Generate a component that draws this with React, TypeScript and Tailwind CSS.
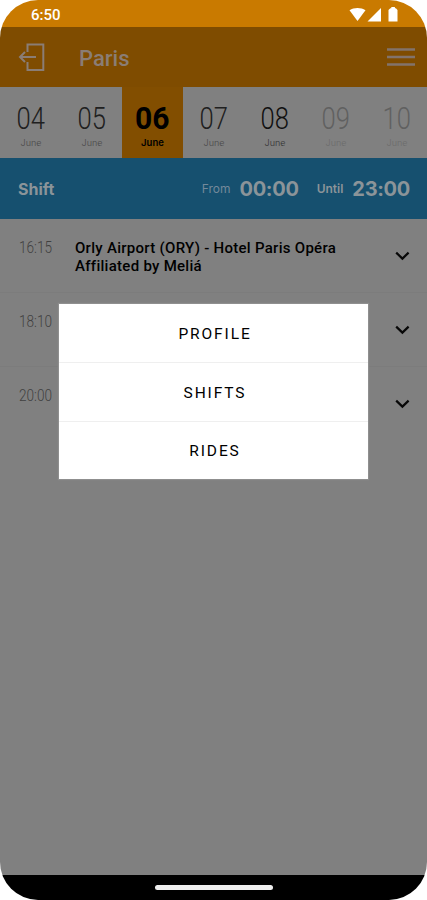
const days = [
  { day: "04", style: "text-[#202020]", month: "text-[#484848]" },
  { day: "05", style: "text-[#202020]", month: "text-[#484848]" },
  { day: "06", active: true },
  { day: "07", style: "text-[#202020]", month: "text-[#484848]" },
  { day: "08", style: "text-[#101010]", month: "text-[#303030]" },
  { day: "09", style: "text-[#606060]", month: "text-[#6b6b6b]" },
  { day: "10", style: "text-[#606060]", month: "text-[#6b6b6b]" },
];

const rides = [
  { time: "16:15", title: "Orly Airport (ORY) - Hotel Paris Opéra Affiliated by Meliá" },
  { time: "18:10" },
  { time: "20:00" },
];

function Chevron() {
  return (
    <svg className="mt-[32px] h-[10px] w-[15px]" viewBox="0 0 15 10" fill="none" stroke="#080808" strokeWidth="2.2">
      <path d="M1.2 1.6 7.4 7.6 13.6 1.6" />
    </svg>
  );
}

function StatusBar() {
  return (
    <div className="flex h-[27px] items-center justify-between bg-[#c97a00] pl-[31px] pr-[29px]">
      <span className="mt-[3px] text-[15px] font-medium leading-none text-white">6:50</span>
      <svg className="mt-[2px] h-[15px] w-[49px]" viewBox="0 0 49 15" fill="#fff">
        <path d="M0.5 3.2C5 0.2 12 0.2 16.5 3.2L8.5 14z" />
        <path d="M32 1v13.5H18.5z" />
        <path d="M39.5 3l1.8-1.7h1V0h3.6v1.3h1L48.5 3v11.5h-9z" />
      </svg>
    </div>
  );
}

function Header() {
  return (
    <header className="flex h-[60px] items-center bg-[#7f4c00] pl-[18px] pr-3">
      <svg className="h-[30px] w-[27px]" viewBox="0 0 27 30" fill="none" stroke="#8a7d75" strokeWidth="2">
        <path d="M9.5 10V2.5h15.8v25.5H9.5V20" />
        <path d="M18 15H2M7 10l-5 5 5 5" />
      </svg>
      <h1 className="ml-[34px] mt-[3px] text-[22px] font-medium leading-none text-[#8a7d75]">Paris</h1>
      <svg className="ml-auto h-[20px] w-[28px]" viewBox="0 0 28 20" stroke="#82736b" strokeWidth="2.5">
        <path d="M0 2.5h28M0 10h28M0 17.5h28" />
      </svg>
    </header>
  );
}

function DateStrip() {
  return (
    <div className="grid h-[71px] grid-cols-7 bg-[#808080]">
      {days.map((d) =>
        d.active ? (
          <div key={d.day} className="flex flex-col items-center bg-[#824e00] pt-[15px] text-black">
            <span className="scale-x-[0.94] text-[32px] font-bold leading-[33px]">{d.day}</span>
            <span className="mt-[2px] font-['Inter',sans-serif] text-[9.5px] font-semibold leading-[12px]">June</span>
          </div>
        ) : (
          <div key={d.day} className="flex flex-col items-center pt-[15px] pl-px">
            <span className={`scale-x-[0.8] text-[32px] font-light leading-[33px] ${d.style}`}>{d.day}</span>
            <span className={`mt-[2px] font-['Inter',sans-serif] text-[9px] font-light leading-[12px] ${d.month}`}>June</span>
          </div>
        )
      )}
    </div>
  );
}

function ShiftBar() {
  return (
    <div className="flex h-[61px] items-center bg-[#16506f] pl-[18px] pr-[17px] font-['Inter',sans-serif] text-[#8b9499]">
      <span className="text-[16px] font-bold">Shift</span>
      <span className="ml-auto text-[12px] text-[#74899a]">From</span>
      <span className="ml-[9px] text-[20px] font-bold tracking-[-0.3px]">00:00</span>
      <span className="ml-[18px] text-[12px] font-semibold">Until</span>
      <span className="ml-[9px] text-[20px] font-bold tracking-[-0.3px]">23:00</span>
    </div>
  );
}

function RideList() {
  return (
    <div className="flex-1 bg-[#808080]">
      {rides.map((ride) => (
        <div key={ride.time} className="flex h-[74px] border-b border-[#7c7c7c] pl-[19px] pr-[17px] last:border-b-0">
          <span className="mt-[19px] w-[56px] shrink-0 origin-left scale-x-[0.85] text-[16px] font-light leading-[20px] text-[#404040]">
            {ride.time}
          </span>
          <p className="mt-[19px] w-[275px] pt-px text-[15px] font-medium leading-[18px] tracking-[0.28px] text-black">
            {ride.title}
          </p>
          <div className="ml-auto">
            <Chevron />
          </div>
        </div>
      ))}
    </div>
  );
}

function Menu() {
  return (
    <nav className="absolute left-[59px] top-[304px] h-[175px] w-[309px] bg-white shadow-[0_0_1px_1px_#8f8f8f]">
      {["PROFILE", "SHIFTS", "RIDES"].map((item) => (
        <button
          key={item}
          className="flex h-[59px] w-full items-center justify-center border-b border-[#efefef] pl-[3px] pt-[3px] text-[15.5px] tracking-[1.9px] text-black last:h-[57px] last:border-b-0 last:pt-[2px]"
        >
          {item}
        </button>
      ))}
    </nav>
  );
}

export default function App() {
  return (
    <div className="h-[900px] w-[427px] bg-white font-['Roboto',sans-serif]">
      <div className="relative flex h-full flex-col overflow-hidden rounded-[38px]">
        <StatusBar />
        <Header />
        <DateStrip />
        <ShiftBar />
        <RideList />
        <div className="flex h-[25px] justify-center bg-black pt-[10px]">
          <div className="h-[5px] w-[118px] rounded-full bg-[#eeeeee]" />
        </div>
        <Menu />
      </div>
    </div>
  );
}
